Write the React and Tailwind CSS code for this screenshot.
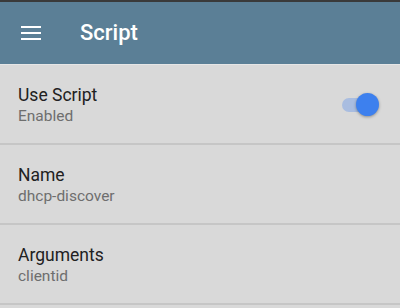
export default function App() {
  const rows = [
    { label: 'Use Script', value: 'Enabled', toggle: true },
    { label: 'Name', value: 'dhcp-discover' },
    { label: 'Arguments', value: 'clientid' },
  ];

  return (
    <div className="w-[400px] h-[308px] overflow-hidden bg-[#d9d9d9] font-['Roboto',sans-serif]">
      <div className="h-[2px] bg-[#3a3a3a]" />
      <header className="h-[62px] bg-[#5b7f96] flex items-center">
        <div className="w-[80px] flex justify-start pl-[21px]">
          <div className="flex flex-col gap-[4px]">
            <span className="block w-[20px] h-[2px] bg-white" />
            <span className="block w-[20px] h-[2px] bg-white" />
            <span className="block w-[20px] h-[2px] bg-white" />
          </div>
        </div>
        <h1 className="text-white text-[22px] font-medium leading-none">Script</h1>
      </header>
      <div className="h-[1px] bg-[#e6e6e6]" />
      {rows.map((row) => (
        <div key={row.label} className="h-[80px] border-b-2 border-[#c6c6c6] flex items-center justify-between pl-[18px] pr-[23px]">
          <div className="flex flex-col pt-[3px]">
            <span className="text-[17.5px] leading-[22px] text-[#212121]">{row.label}</span>
            <span className="text-[15.5px] leading-[21px] text-[#6e6e6e]">{row.value}</span>
          </div>
          {row.toggle && (
            <div className="relative w-[35px] h-[14px] rounded-full bg-[#a9bde0] mt-[2px]">
              <div className="absolute right-[-2px] top-[-5px] w-[23px] h-[23px] rounded-full bg-[#3d80ee] shadow-[0_1px_3px_rgba(0,0,0,0.35)]" />
            </div>
          )}
        </div>
      ))}
    </div>
  );
}
